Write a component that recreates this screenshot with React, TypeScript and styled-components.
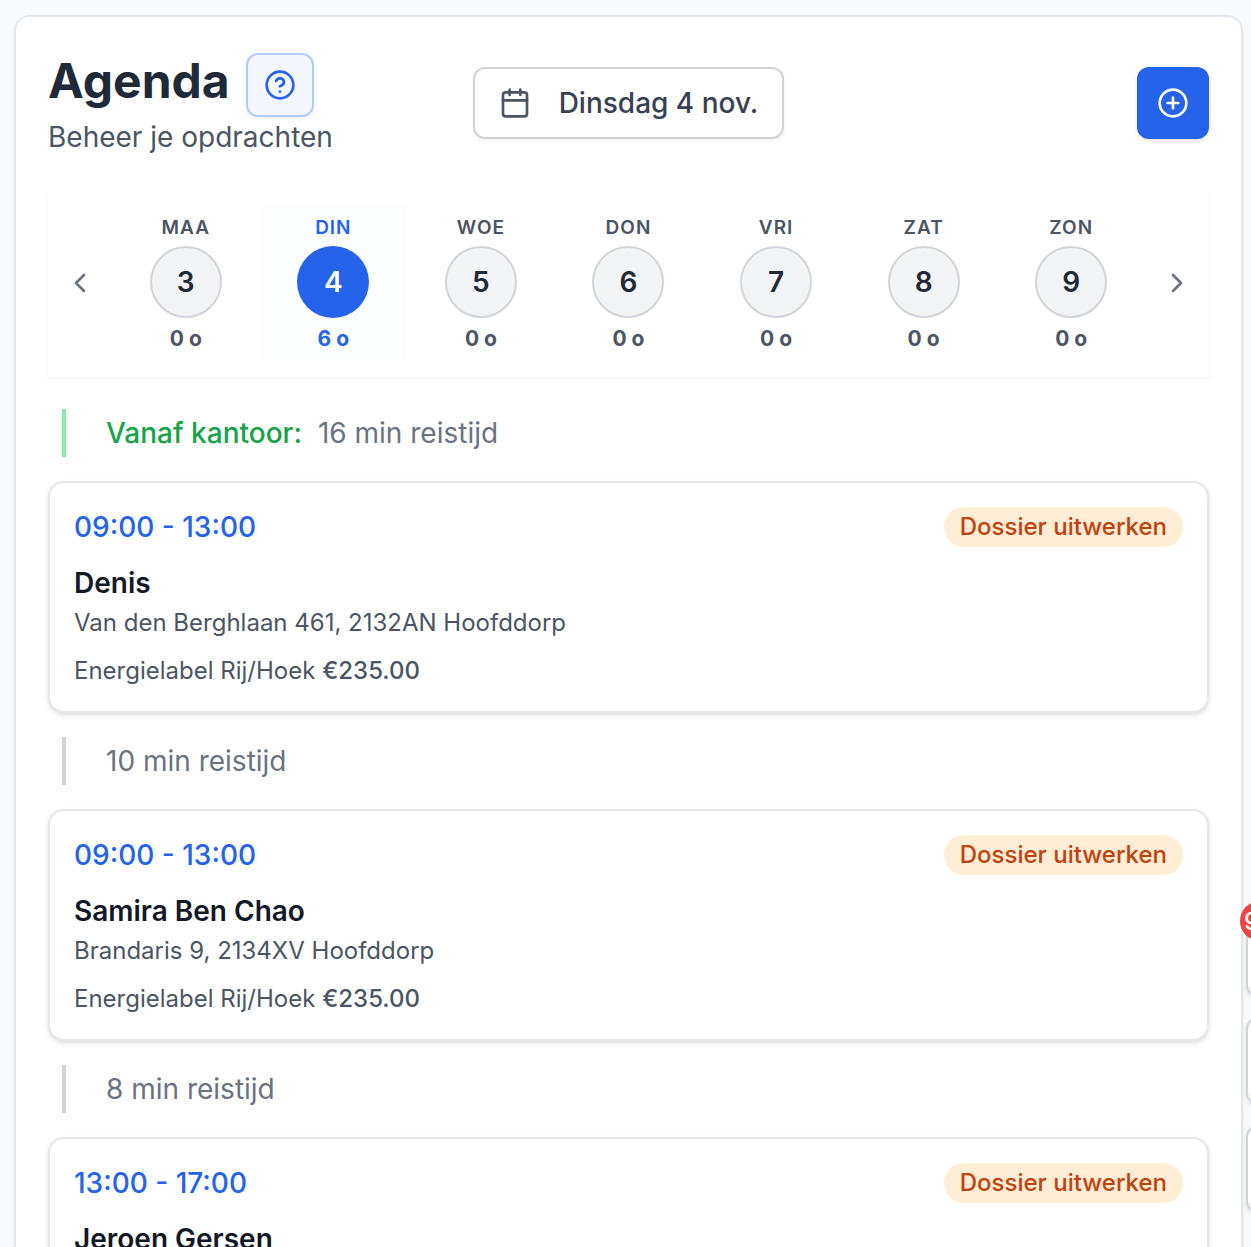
import React from "react";
import styled, { createGlobalStyle, css } from "styled-components";
import { Calendar, ChevronLeft, ChevronRight, CircleHelp, CirclePlus } from "lucide-react";

const GlobalStyle = createGlobalStyle`
  *, *::before, *::after { box-sizing: border-box; }
  html, body { margin: 0; height: 1247px; overflow: hidden; }
  body {
    background: #f9fafb;
    font-family: Inter, "Liberation Sans", sans-serif;
    color: #111827;
  }
  button { font: inherit; margin: 0; padding: 0; cursor: pointer; }
  h1, h2, p { margin: 0; }
`;

const Page = styled.div`
  position: relative;
  height: 1247px;
  padding: 15px 8px 0 14px;
  overflow: hidden;
`;

const Panel = styled.main`
  height: 1400px;
  padding: 32px 32px 0;
  background: #fff;
  border: 2px solid #e2e8f0;
  border-radius: 16px;
  box-shadow: 0 2px 4px rgba(0, 0, 0, 0.05);
`;

const Header = styled.header`
  display: grid;
  grid-template-columns: 1fr auto 1fr;
  align-items: center;
  height: 108px;
`;

const TitleBlock = styled.div`
  padding-top: 4px;
`;

const TitleRow = styled.div`
  display: flex;
  align-items: center;
  gap: 16px;
`;

const Title = styled.h1`
  font-size: 48px;
  line-height: 56px;
  font-weight: 700;
  color: #1f2937;
  padding-bottom: 8px;
`;

const Subtitle = styled.p`
  font-size: 28px;
  line-height: 40px;
  color: #4b5563;
`;

const HelpButton = styled.button`
  display: flex;
  align-items: center;
  justify-content: center;
  width: 68px;
  height: 64px;
  color: #2563eb;
  background: #f4f7ff;
  border: 2px solid #b3cbf9;
  border-radius: 12px;
  box-shadow: 0 2px 4px rgba(0, 0, 0, 0.05);
`;

const DateButton = styled.button`
  display: flex;
  align-items: center;
  gap: 28px;
  height: 72px;
  padding: 0 24px;
  font-size: 28px;
  font-weight: 500;
  color: #374151;
  background: #fff;
  border: 2px solid #d1d5db;
  border-radius: 12px;
  box-shadow: 0 2px 4px rgba(0, 0, 0, 0.05);
  svg { color: #4b5563; }
`;

const AddButton = styled.button`
  display: flex;
  align-items: center;
  justify-content: center;
  justify-self: end;
  width: 72px;
  height: 72px;
  color: #fff;
  background: #2563eb;
  border: 0;
  border-radius: 12px;
  box-shadow: 0 2px 4px rgba(0, 0, 0, 0.12);
`;

const WeekStrip = styled.section`
  display: grid;
  grid-template-columns: 64px 1fr 64px;
  align-items: center;
  height: 188px;
  margin-top: 32px;
  background: #fff;
  box-shadow: 0 2px 4px rgba(0, 0, 0, 0.05);
`;

const Arrow = styled.button`
  display: flex;
  align-items: center;
  justify-content: center;
  height: 64px;
  color: #6b7280;
  background: none;
  border: 0;
`;

const Days = styled.div`
  display: grid;
  grid-template-columns: repeat(7, 1fr);
`;

const Day = styled.div<{ $active: boolean }>`
  display: flex;
  flex-direction: column;
  align-items: center;
  height: 156px;
  padding-top: 9px;
  color: ${(p) => (p.$active ? "#2563eb" : "#4b5563")};
  background: ${(p) => (p.$active ? "#fbfdff" : "transparent")};
`;

const DayName = styled.span`
  font-size: 19px;
  line-height: 28px;
  font-weight: 600;
  letter-spacing: 1px;
`;

const DayNumber = styled.span<{ $active: boolean }>`
  display: flex;
  align-items: center;
  justify-content: center;
  width: 72px;
  height: 72px;
  margin-top: 4px;
  border-radius: 50%;
  font-size: 28px;
  font-weight: 600;
  ${(p) =>
    p.$active
      ? css`
          color: #fff;
          background: #2563eb;
        `
      : css`
          color: #1f2937;
          background: #f3f4f6;
          border: 2px solid #d1d5db;
        `}
`;

const DayCount = styled.span`
  margin-top: 5px;
  font-size: 21px;
  line-height: 32px;
  font-weight: 700;
`;

const Schedule = styled.section`
  display: flex;
  flex-direction: column;
  gap: 24px;
  margin-top: 32px;
`;

const Travel = styled.div<{ $office: boolean }>`
  display: flex;
  align-items: center;
  gap: 16px;
  flex: none;
  height: 48px;
  margin-left: 14px;
  padding-left: 40px;
  border-left: 4px solid ${(p) => (p.$office ? "#86efac" : "#d1d5db")};
  font-size: 28px;
  line-height: 40px;
  color: #6b7280;
`;

const Origin = styled.span`
  font-weight: 500;
  color: #16a34a;
`;

const Card = styled.article`
  flex: none;
  height: 232px;
  padding: 24px;
  background: #fff;
  border: 2px solid #e5e7eb;
  border-radius: 16px;
  box-shadow: 0 2px 6px rgba(0, 0, 0, 0.1), 0 2px 4px -2px rgba(0, 0, 0, 0.1);
`;

const CardTop = styled.div`
  display: flex;
  align-items: center;
  justify-content: space-between;
`;

const Time = styled.span`
  font-size: 28px;
  line-height: 40px;
  font-weight: 500;
  color: #2563eb;
`;

const Badge = styled.span`
  padding: 4px 16px;
  border-radius: 20px;
  font-size: 24px;
  line-height: 32px;
  font-weight: 500;
  color: #c2410c;
  background: #ffedd5;
`;

const Client = styled.h2`
  margin-top: 16px;
  font-size: 28px;
  line-height: 40px;
  font-weight: 600;
`;

const Detail = styled.p<{ $gap: number }>`
  margin-top: ${(p) => p.$gap}px;
  font-size: 24px;
  line-height: 32px;
  color: #4b5563;
`;

const Price = styled.span`
  font-weight: 500;
`;

/* Floating shortcuts docked past the right edge of the viewport */
const Dock = styled.aside`
  position: absolute;
  top: 909px;
  left: 1246px;
  display: flex;
  flex-direction: column;
  gap: 20px;
`;

const DockButton = styled.div`
  position: relative;
  width: 88px;
  height: 88px;
  background: #fff;
  border: 2px solid #d1d5db;
  border-radius: 12px;
  box-shadow: 0 2px 4px rgba(0, 0, 0, 0.1);
`;

const Counter = styled.span`
  position: absolute;
  top: -10px;
  left: -8px;
  display: flex;
  align-items: center;
  width: 40px;
  height: 40px;
  padding-left: 4px;
  border-radius: 50%;
  font-size: 24px;
  font-weight: 500;
  color: #fff;
  background: #ef4444;
`;

const days = [
  { name: "MAA", date: 3, count: 0 },
  { name: "DIN", date: 4, count: 6 },
  { name: "WOE", date: 5, count: 0 },
  { name: "DON", date: 6, count: 0 },
  { name: "VRI", date: 7, count: 0 },
  { name: "ZAT", date: 8, count: 0 },
  { name: "ZON", date: 9, count: 0 },
];

const appointments = [
  { from: "Vanaf kantoor:", travel: 16, time: "09:00 - 13:00", client: "Denis", address: "Van den Berghlaan 461, 2132AN Hoofddorp" },
  { travel: 10, time: "09:00 - 13:00", client: "Samira Ben Chao", address: "Brandaris 9, 2134XV Hoofddorp" },
  { travel: 8, time: "13:00 - 17:00", client: "Jeroen Gersen", address: "" },
];

export default function App() {
  const selected = 4;
  return (
    <>
      <GlobalStyle />
      <Page>
        <Panel>
          <Header>
            <TitleBlock>
              <TitleRow>
                <Title>Agenda</Title>
                <HelpButton aria-label="Help">
                  <CircleHelp size={32} />
                </HelpButton>
              </TitleRow>
              <Subtitle>Beheer je opdrachten</Subtitle>
            </TitleBlock>
            <DateButton>
              <Calendar size={32} />
              Dinsdag 4 nov.
            </DateButton>
            <AddButton aria-label="Nieuw">
              <CirclePlus size={32} />
            </AddButton>
          </Header>

          <WeekStrip>
            <Arrow aria-label="Vorige week">
              <ChevronLeft size={32} />
            </Arrow>
            <Days>
              {days.map((d) => (
                <Day key={d.date} $active={d.date === selected}>
                  <DayName>{d.name}</DayName>
                  <DayNumber $active={d.date === selected}>{d.date}</DayNumber>
                  <DayCount>{d.count} o</DayCount>
                </Day>
              ))}
            </Days>
            <Arrow aria-label="Volgende week">
              <ChevronRight size={32} />
            </Arrow>
          </WeekStrip>

          <Schedule>
            {appointments.map((a) => (
              <React.Fragment key={a.client}>
                <Travel $office={!!a.from}>
                  {a.from && <Origin>{a.from}</Origin>}
                  <span>{a.travel} min reistijd</span>
                </Travel>
                <Card>
                  <CardTop>
                    <Time>{a.time}</Time>
                    <Badge>Dossier uitwerken</Badge>
                  </CardTop>
                  <Client>{a.client}</Client>
                  {a.address && (
                    <>
                      <Detail $gap={4}>{a.address}</Detail>
                      <Detail $gap={16}>
                        Energielabel Rij/Hoek <Price>€235.00</Price>
                      </Detail>
                    </>
                  )}
                </Card>
              </React.Fragment>
            ))}
          </Schedule>
        </Panel>

        <Dock>
          <DockButton>
            <Counter>9</Counter>
          </DockButton>
          <DockButton />
          <DockButton />
        </Dock>
      </Page>
    </>
  );
}
